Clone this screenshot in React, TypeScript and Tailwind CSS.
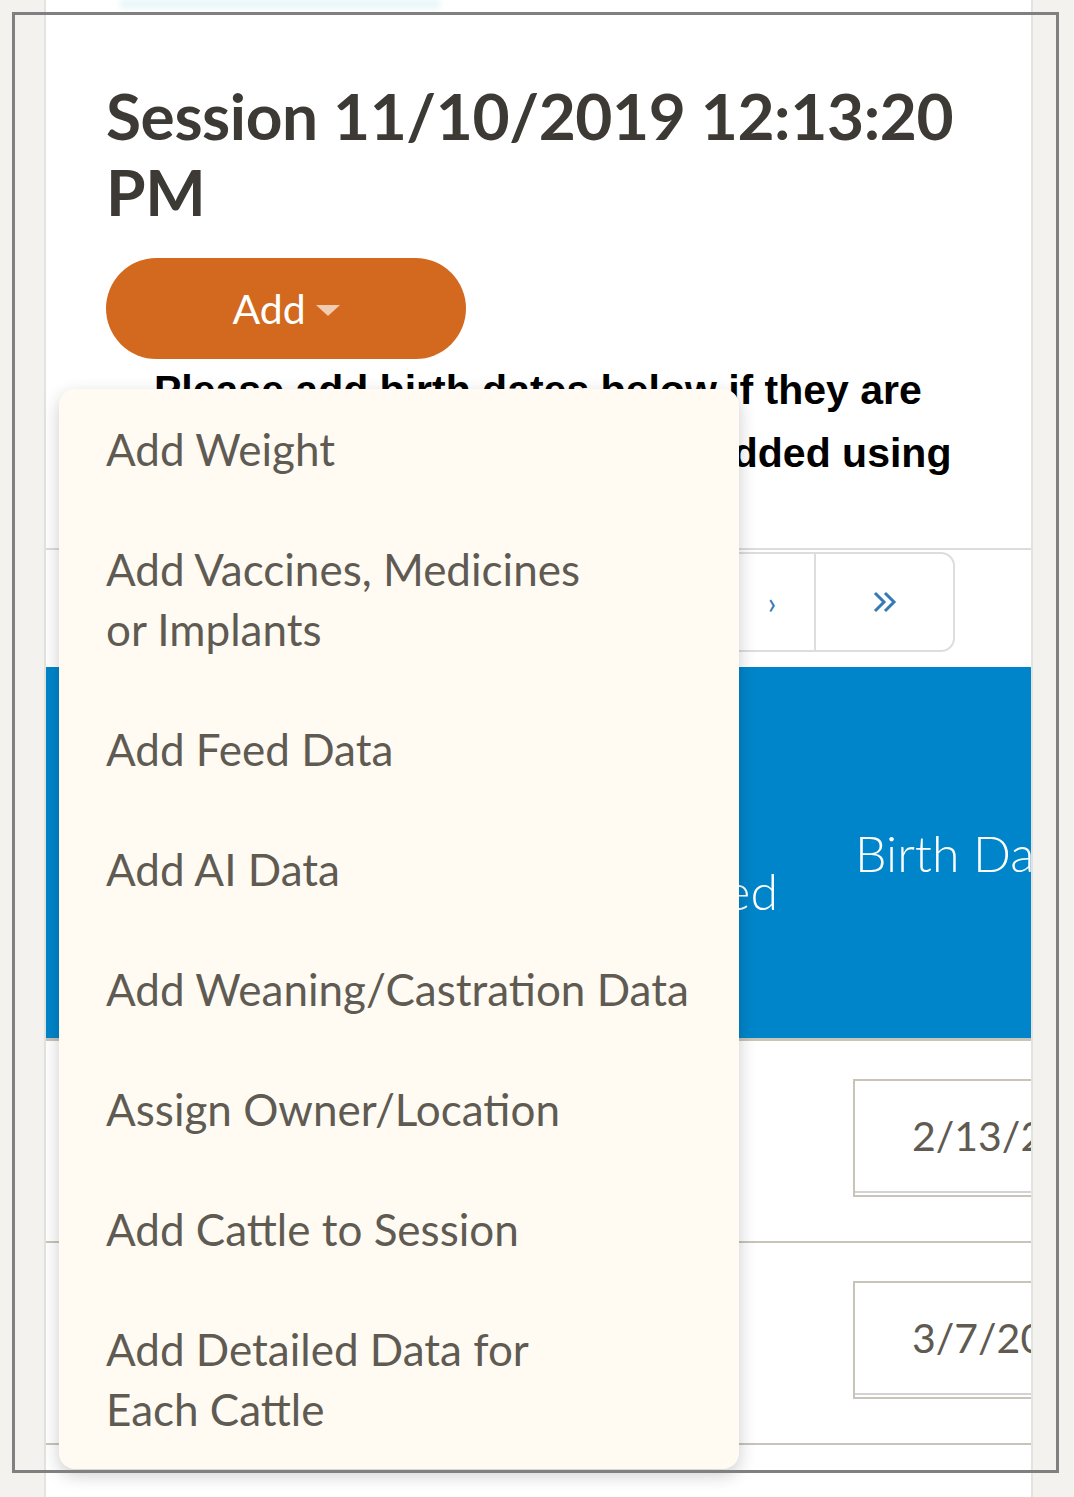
import React from 'react';

const menuItems: React.ReactNode[] = [
  'Add Weight',
  <>Add Vaccines, Medicines<br />or Implants</>,
  'Add Feed Data',
  'Add AI Data',
  'Add Weaning/Castration Data',
  'Assign Owner/Location',
  'Add Cattle to Session',
  <>Add Detailed Data for<br />Each Cattle</>,
];

const rows = ['2/13/2019', '3/7/2019'];

const font = { fontFamily: 'Lato, "Noto Sans", sans-serif' };

function AddMenu() {
  return (
    <div
      className="absolute left-[59px] top-[389px] w-[680px] rounded-2xl bg-[#fffbf3] shadow-[0_6px_18px_rgba(0,0,0,0.2)] z-20"
      style={font}
    >
      <ul>
        {menuItems.map((item, i) => (
          <li key={i} className="pl-[47px] pr-[20px] py-[30px] text-[44px] leading-[60px] text-[#5f5b53] whitespace-nowrap">
            {item}
          </li>
        ))}
      </ul>
    </div>
  );
}

export default function App() {
  return (
    <div className="relative min-h-screen bg-[#f3f2ee] overflow-hidden" style={font}>
      {/* bleed of an image cut at the top */}
      <div className="absolute left-[120px] top-0 h-[8px] w-[320px] bg-[#e4f6f8] blur-[3px]" />

      <div className="ml-[44px] w-[989px] min-h-[1497px] bg-white border-l-2 border-r-2 border-[#e3e3e0]">
        <div className="pl-[60px] pr-[20px] pt-[78px] h-[504px]">
          <h1 className="text-[64px] leading-[76px] font-bold text-[#3d3935] tracking-[-0.4px]">
            Session 11/10/2019 12:13:20 PM
          </h1>
          <button className="mt-[28px] w-[360px] h-[101px] rounded-full bg-[#d2691e] text-white text-[41px] flex items-center justify-center gap-[10px]">
            Add
            <span className="inline-block w-0 h-0 border-l-[12px] border-r-[12px] border-t-[11px] border-l-transparent border-r-transparent border-t-[#f2cbb3] mt-[4px]" />
          </button>
          <p
            className="ml-[48px] text-[41px] leading-[63px] font-bold text-black whitespace-nowrap"
            style={{ fontFamily: '"Liberation Sans", Arial, sans-serif' }}
          >
            Please add birth dates below if they are
            <br />
            missing. If these cattle were added using
          </p>
        </div>

        <div className="mt-[44px] border-t-2 border-[#dcdcdc]">
          <div className="flex justify-end pr-[76px] pt-[2px]">
            <div className="flex h-[100px] border-2 border-[#dddddd] rounded-r-[14px] text-[#337ab7]">
              <div className="w-[139px] flex items-center justify-center text-[30px]">‹</div>
              <div className="w-[86px] flex items-center justify-center text-[30px] border-l-2 border-[#dddddd]">›</div>
              <div className="w-[139px] flex items-center justify-center border-l-2 border-[#dddddd]">
                <svg width="26" height="24" viewBox="0 0 26 24" fill="none" stroke="#337ab7" strokeWidth="3">
                  <path d="M3 3l9 9-9 9M13 3l9 9-9 9" />
                </svg>
              </div>
            </div>
          </div>

          <div className="mt-[15px] overflow-hidden">
            <div className="grid grid-cols-[785px_200px] h-[374px] bg-[#0085ca] text-white text-[50px] font-light leading-[76px] border-b-[3px] border-[#c8c4b8]">
              <div className="flex items-center justify-end pr-[53px]">
                <span className="text-left">Date<br />Castrated</span>
              </div>
              <div className="flex items-center pl-[24px] whitespace-nowrap">Birth Date</div>
            </div>
            {rows.map((d) => (
              <div key={d} className="grid grid-cols-[785px_200px] h-[202px] border-b-2 border-[#c8c4b8]">
                <div />
                <div className="pt-[38px] pl-[22px]">
                  <div className="h-[118px] w-[260px] border-2 border-[#c8c4b8] flex flex-col">
                    <div className="flex-1 flex items-center pl-[57px] text-[41px] text-[#5f5a52] whitespace-nowrap">
                      {d}
                    </div>
                    <div className="h-[4px] border-t-2 border-[#d3d3d3]" />
                  </div>
                </div>
              </div>
            ))}
          </div>
        </div>
      </div>

      <AddMenu />

      {/* screenshot frame */}
      <div className="absolute left-[12px] top-[12px] w-[1047px] h-[1461px] border-[3px] border-[#808080] pointer-events-none z-30" />
    </div>
  );
}
